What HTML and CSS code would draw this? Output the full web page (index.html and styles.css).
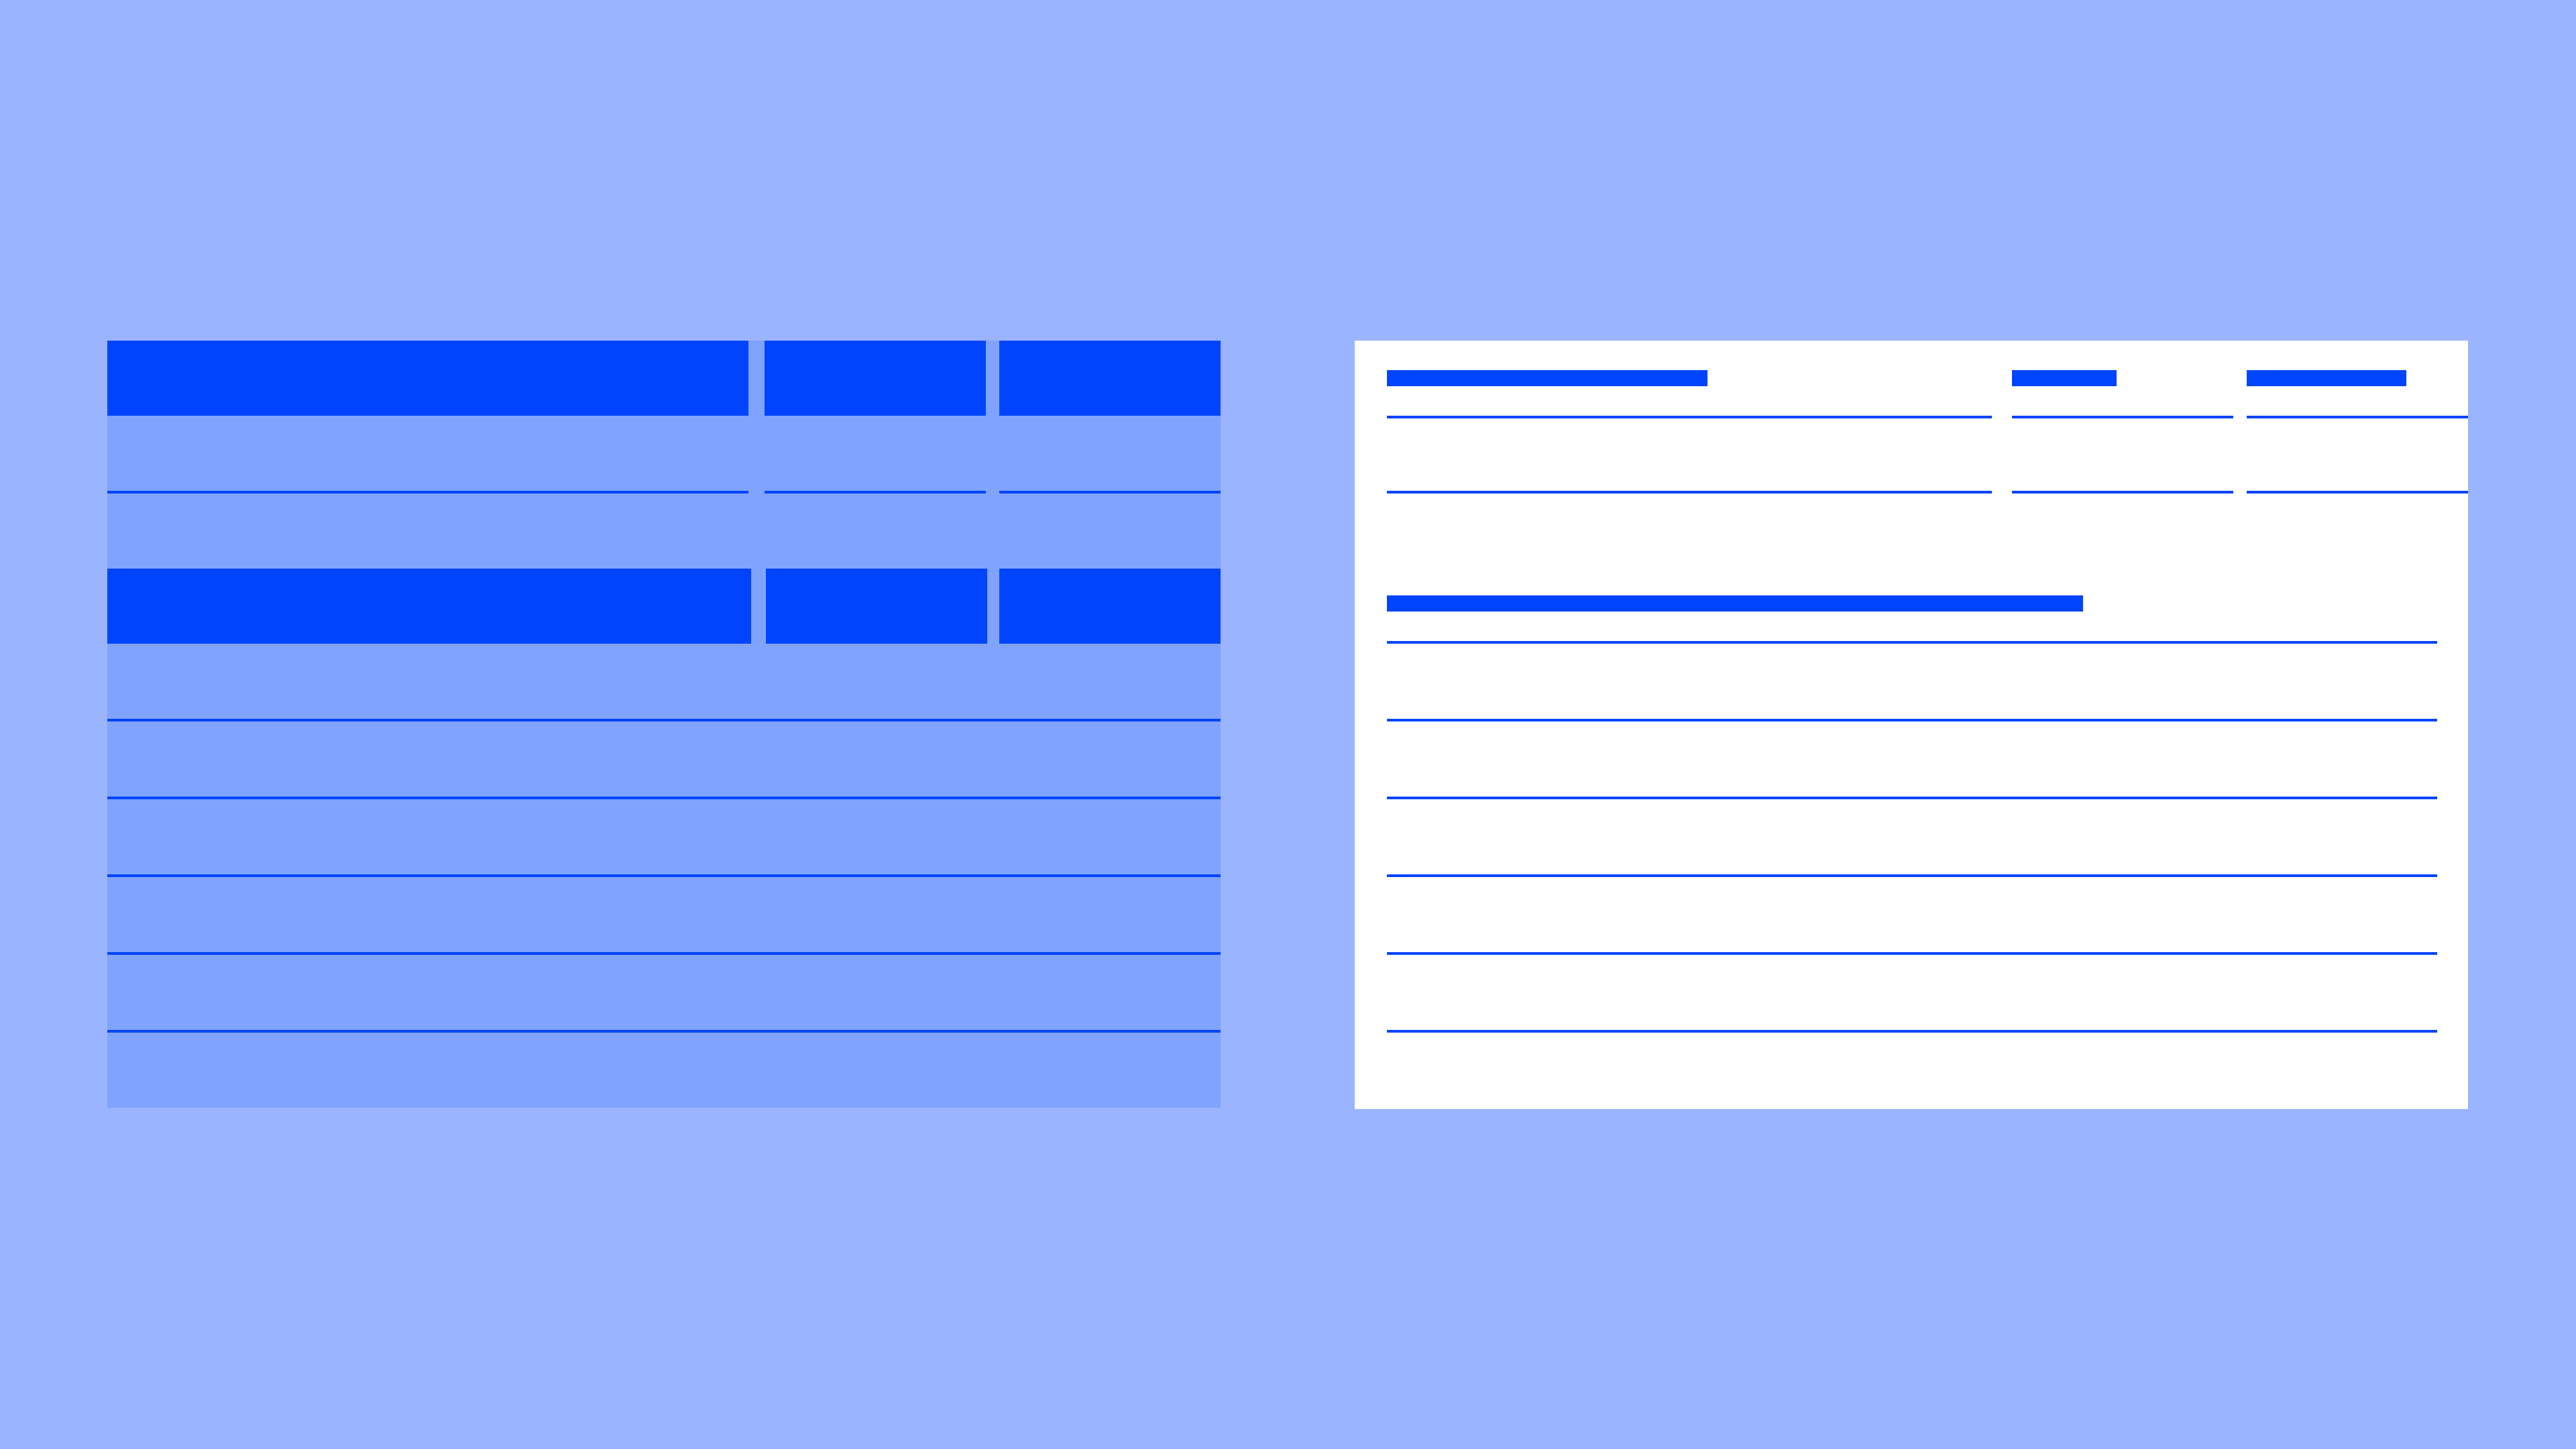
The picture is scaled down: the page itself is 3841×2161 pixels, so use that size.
FILE: index.html
```html
<!DOCTYPE html>
<html lang="en">
<head>
<meta charset="utf-8">
<title>Table layouts</title>
<link rel="stylesheet" href="styles.css">
</head>
<body>
<main class="stage">
  <section class="grid-table" aria-label="Filled table">
    <div class="head head-a">
      <div class="cell c1"></div>
      <div class="cell c2"></div>
      <div class="cell c3"></div>
    </div>
    <div class="body-row"></div>
    <div class="split-rule">
      <div class="seg c1"></div>
      <div class="seg c2"></div>
      <div class="seg c3"></div>
    </div>
    <div class="body-row"></div>
    <div class="head head-b">
      <div class="cell c1"></div>
      <div class="cell c2"></div>
      <div class="cell c3"></div>
    </div>
    <div class="rows">
      <div class="body-row"></div>
      <div class="body-row"></div>
      <div class="body-row"></div>
      <div class="body-row"></div>
      <div class="body-row"></div>
      <div class="body-row"></div>
    </div>
  </section>

  <section class="card" aria-label="Outlined table">
    <div class="cols">
      <div class="col col-1">
        <div class="label w-1"></div>
        <div class="rule first"></div>
        <div class="rule next"></div>
      </div>
      <div class="col col-2">
        <div class="label w-2"></div>
        <div class="rule first"></div>
        <div class="rule next"></div>
      </div>
      <div class="col col-3">
        <div class="label w-3"></div>
        <div class="rule first"></div>
        <div class="rule next"></div>
      </div>
    </div>
    <div class="section">
      <div class="label w-section"></div>
      <div class="list">
        <div class="rule wide first"></div>
        <div class="rule wide next"></div>
        <div class="rule wide next"></div>
        <div class="rule wide next"></div>
        <div class="rule wide next"></div>
        <div class="rule wide next"></div>
      </div>
    </div>
  </section>
</main>
</body>
</html>
```

FILE: styles.css
```css
html, body {
  margin: 0;
  padding: 0;
}

body {
  background: #9ab4ff;
  font-family: "Liberation Sans", Arial, sans-serif;
  width: 3841px;
  height: 2161px;
  overflow: hidden;
}

.stage {
  display: flex;
  align-items: flex-start;
  gap: 200px;
  padding: 508px 0 0 160px;
}

/* ---------- left: filled table ---------- */
.grid-table {
  width: 1660px;
  background: #80a3ff;
  display: flex;
  flex-direction: column;
}

.head {
  display: flex;
  height: 112px;
}

.head .cell {
  background: #0044ff;
  height: 100%;
}

.head-a .c1 { width: 956px; }
.head-a .c2 { width: 330px; margin-left: 24px; }
.head-a .c3 { width: 330px; margin-left: 20px; }

.head-b .c1 { width: 960px; }
.head-b .c2 { width: 330px; margin-left: 22px; }
.head-b .c3 { width: 330px; margin-left: 18px; }

.body-row {
  height: 112px;
}

.split-rule {
  display: flex;
  height: 4px;
}

.split-rule .seg { background: #0044ff; }
.split-rule .c1 { width: 956px; }
.split-rule .c2 { width: 330px; margin-left: 24px; }
.split-rule .c3 { width: 330px; margin-left: 20px; }

.rows .body-row + .body-row {
  border-top: 4px solid #0044ff;
}

/* ---------- right: outlined card ---------- */
.card {
  width: 1612px;
  background: #ffffff;
  padding: 44px 0 114px 48px;
}

.cols {
  display: flex;
}

.col-1 { width: 902px; }
.col-2 { width: 330px; margin-left: 30px; }
.col-3 { width: 330px; margin-left: 20px; }

.label {
  height: 24px;
  background: #0044ff;
}

.w-1 { width: 478px; }
.w-2 { width: 156px; }
.w-3 { width: 238px; }
.w-section { width: 1038px; }

.rule {
  height: 4px;
  background: #0044ff;
}

.rule.first { margin-top: 44px; }
.rule.next { margin-top: 108px; }

.section {
  margin-top: 152px;
}

.rule.wide { width: 1566px; }
.list .rule.wide.next { margin-top: 112px; }
```
